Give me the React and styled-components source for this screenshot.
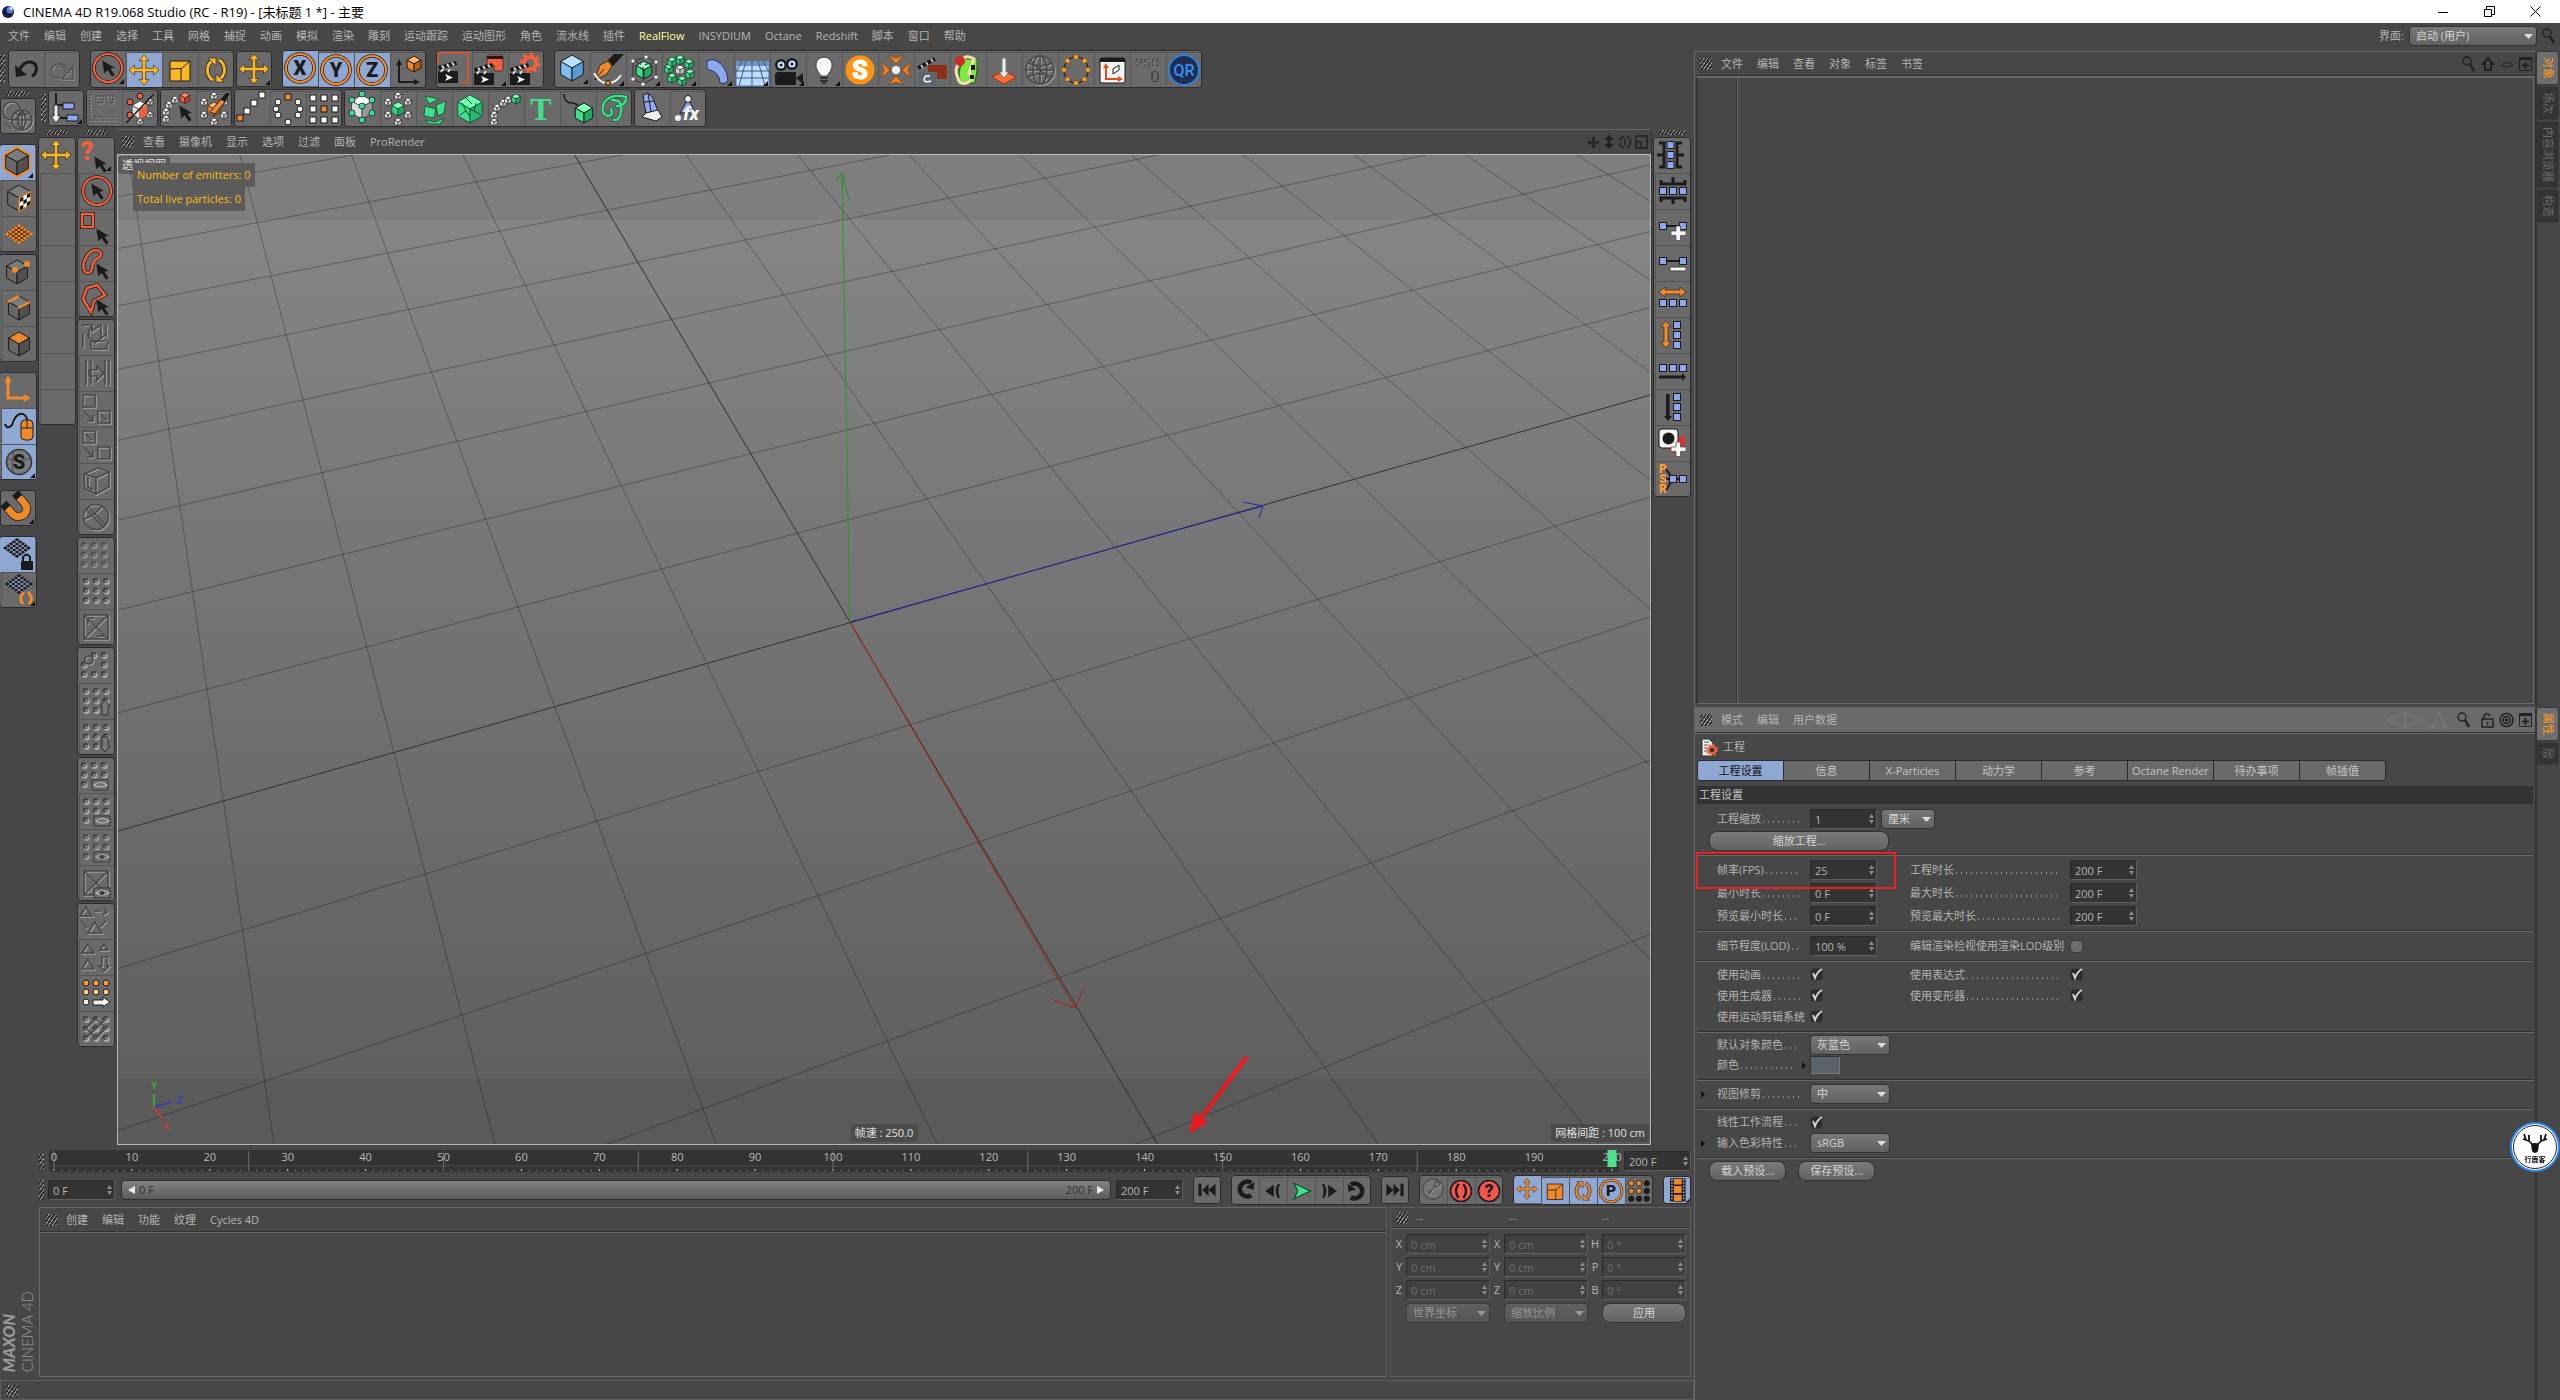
import React from "react";
import styled, { createGlobalStyle, css } from "styled-components";

const GlobalStyle = createGlobalStyle`
  * { box-sizing: border-box; }
  body {
    margin: 0;
    background: #474747;
    color: #b4b4b4;
    font: 11px/16px "Open Sans", "Noto Sans CJK SC", sans-serif;
  }
  button, input, select { font: inherit; color: inherit; margin: 0; }
  svg { display: block; }
`;

/* ---------- layout ---------- */

const Window = styled.div`
  display: flex;
  flex-direction: column;
  min-height: 100vh;
`;

const TitleBar = styled.header`
  display: flex;
  align-items: center;
  height: 23px;
  padding: 0 2px;
  background: #fff;
  color: #000;
`;

const WindowTitle = styled.h1`
  margin: 0 auto 0 8px;
  font-size: 13px;
  font-weight: 400;
`;

const WindowButton = styled.button`
  display: grid;
  place-items: center;
  width: 46px;
  height: 20px;
  padding: 0;
  border: 0;
  background: none;
`;

const MenuBar = styled.nav`
  display: flex;
  align-items: center;
  gap: 14px;
  height: ${p => p.$height || 24}px;
  padding: ${p => (p.$panel ? "0 3px 0 5px" : "0 4px 2px 8px")};
  background: ${p => (p.$light ? "#6a6a6a" : "none")};
  border-bottom: ${p => (p.$lined ? "1px solid #333" : "0")};
  box-shadow: ${p => (p.$lined ? "0 1px #696969" : "none")};
`;

const MenuItem = styled.button`
  padding: 0;
  border: 0;
  background: none;
  white-space: nowrap;
  color: ${p => (p.$hot ? "#ffff9c" : "#b4b4b4")};
`;

const Spacer = styled.div`
  flex: 1;
`;

const IconStrip = styled.div`
  display: flex;
  align-items: center;
  gap: ${p => p.$gap || 3}px;
`;

const Workspace = styled.div`
  display: flex;
  flex: 1;
`;

const LeftMain = styled.main`
  display: flex;
  flex-direction: column;
  flex: 1;
  min-width: 0;
`;

const Row = styled.div`
  display: flex;
  flex: ${p => (p.$grow ? 1 : "none")};
  min-width: 0;
`;

const Stack = styled.div`
  display: flex;
  flex-direction: column;
  flex: 1;
  min-width: 0;
`;

const Toolbar = styled.div`
  display: flex;
  align-items: center;
  height: ${p => (p.$inset ? 40 : 38)}px;
  padding-left: ${p => p.$inset || 0}px;
`;

const Palette = styled.div`
  display: flex;
  flex-direction: column;
  align-items: center;
  width: ${p => (p.$wide ? 42 : 39)}px;
  padding: ${p => (p.$first ? "3px 3px 0 0" : "2px 3px 0 0")};
`;

const Grip = styled.div`
  flex: none;
  width: ${p => p.$w || 12}px;
  height: ${p => p.$h || 12}px;
  background: repeating-linear-gradient(125deg, #a0a0a0 0 1px, #2c2c2c 1px 3px);
  opacity: 0.85;
`;

const MenuGrip = styled(Grip)`
  margin-right: -5px;
`;

const Group = styled.div`
  display: flex;
  flex: none;
  flex-direction: ${p => (p.$vertical ? "column" : "row")};
  margin: ${p => (p.$vertical ? `${p.$gap}px 0 0 0` : `0 0 0 ${p.$gap}px`)};
  border: 1px solid #2b2b2b;
  border-radius: 4px;
  overflow: hidden;
  background: #6a6a6a;
`;

const ToolButton = styled.button`
  flex: none;
  position: relative;
  width: ${p => p.$size}px;
  height: ${p => p.$size}px;
  margin: -1px;
  padding: 0;
  border: 1px solid transparent;
  background: ${p => (p.$on ? "#8fa8d3" : "#6a6a6a")};
  ${p => p.$vertical
    ? css`& + & { margin-top: 1px; border-top-color: #555; }`
    : css`& + & { margin-left: 1px; border-left-color: #555; }`}
  svg { position: absolute; inset: -1px; width: ${p => p.$size}px; height: ${p => p.$size}px; }
`;

const Brand = styled.div`
  display: flex;
  flex-direction: column;
  width: 36px;
  margin: auto 0 5px;
  writing-mode: vertical-rl;
  transform: rotate(180deg);
  color: #999;
  font: 300 15px/18px Lato, sans-serif;
  b { font: italic 900 16px/18px Lato, sans-serif; }
`;

/* ---------- viewport ---------- */

const ViewPanel = styled.section`
  display: flex;
  flex-direction: column;
  flex: 1;
  min-width: 0;
  margin-top: 1px;
  border-top: 1px solid #696969;
  border-right: 1px solid #333;
`;

const View = styled.div`
  position: relative;
  flex: 1;
  min-height: 400px;
  border: 1px solid #b9b9b9;
  overflow: hidden;
  background: linear-gradient(#858585 7%, #5f5f5f 94%);
  & > svg { position: absolute; width: 100%; height: 100%; }
`;

const SafeStrip = styled.div`
  position: absolute;
  left: 0;
  right: 0;
  height: 65px;
  ${p => (p.$bottom ? "bottom: 0;" : "top: 0;")}
  background: rgba(0, 0, 0, 0.05);
`;

const ViewLabel = styled.span`
  position: absolute;
  padding: 1px 4px;
  border-radius: 3px;
  background: rgba(64, 64, 64, 0.55);
  color: #e0e0e0;
  ${p => p.$at}
`;

const ParticleInfo = styled.div`
  position: absolute;
  left: 15px;
  top: 8px;
  display: flex;
  flex-direction: column;
  align-items: flex-start;
  color: #fdbc0b;
  span { padding: 4px; background: #5b5b5b; }
`;

/* ---------- controls ---------- */

const FieldBox = styled.span`
  display: inline-flex;
  align-items: center;
  flex: none;
  width: ${p => p.$w || 67}px;
  height: 20px;
  padding-right: 2px;
  border: 1px solid;
  border-color: #2a2a2a #606060 #606060 #2a2a2a;
  border-radius: 2px;
  background: ${p => (p.$off ? "#414141" : "#333")};
  color: ${p => (p.$off ? "#6e6e6e" : "#b4b4b4")};
  input {
    flex: 1;
    width: 0;
    height: 18px;
    padding: 0 0 0 4px;
    border: 0;
    background: none;
  }
`;

const SelectBox = styled.span`
  position: relative;
  flex: none;
  width: ${p => p.$w}px;
  height: 20px;
  opacity: ${p => (p.$off ? 0.55 : 1)};
  select {
    appearance: none;
    width: 100%;
    height: 20px;
    padding: 0 6px;
    border: 1px solid #333;
    border-radius: 4px;
    background: linear-gradient(#787878, #616161);
    color: #d4d4d4;
    opacity: 1;
  }
  svg { position: absolute; right: 4px; top: 8px; pointer-events: none; }
`;

const PillButton = styled.button`
  flex: none;
  width: ${p => p.$w}px;
  height: 20px;
  padding: 0;
  border: 1px solid #333;
  border-radius: 8px;
  background: linear-gradient(#7a7a7a, #636363);
  color: #d4d4d4;
`;

const Tick = styled.span`
  position: relative;
  flex: none;
  width: 13px;
  height: 13px;
  input {
    appearance: none;
    display: block;
    width: 13px;
    height: 13px;
    margin: 0;
    border: 1px solid #3c3c3c;
    border-radius: 4px;
    background: #6e6e6e;
  }
  input:checked { background: #2c2c2c; }
  svg { position: absolute; left: 1px; top: 0; pointer-events: none; }
`;

/* ---------- timeline ---------- */

const Timeline = styled.div`
  display: flex;
  align-items: center;
  height: 22px;
  margin: 5px 3px 4px 0;
  gap: 5px;
`;

const Ruler = styled.div`
  flex: 1;
  height: 22px;
  padding: 0 7px 0 5px;
  border-radius: 3px;
  background: linear-gradient(#333 0 15px, #3e3e3e 15px 17px, #333 17px);
  svg { width: 100%; height: 22px; overflow: visible; }
`;

const Transport = styled.div`
  display: flex;
  align-items: center;
  height: 28px;
  margin: 0 3px 3px 0;
`;

const RangeBar = styled.div`
  display: flex;
  align-items: center;
  justify-content: space-between;
  flex: 1;
  height: 20px;
  margin: 0 5px 0 6px;
  padding: 0 6px;
  border: 1px solid #2e2e2e;
  border-radius: 4px;
  background: linear-gradient(#818181, #5c5c5c);
  color: #333;
  span { display: flex; align-items: center; gap: 4px; }
`;

const Materials = styled.section`
  flex: 1;
  height: 170px;
  border: 1px solid #696969;
  border-right-color: #5c5c5c;
`;

const Coordinates = styled.section`
  width: 301px;
  height: 170px;
  margin: 0 3px 0 3px;
  border: 1px solid #5c5c5c;
`;

const CoordHead = styled.div`
  display: grid;
  grid-template-columns: 20px 93px 93px 1fr;
  align-items: center;
  height: 20px;
  padding-left: 5px;
  border-bottom: 1px solid #333;
  box-shadow: 0 1px #696969;
  color: #8c8c8c;
`;

const CoordGrid = styled.div`
  display: grid;
  grid-template-columns: 10px 84px 10px 84px 10px 84px;
  gap: 3px 2px;
  align-items: center;
  padding: 6px 0 0 3px;
  label { text-align: center; }
`;

const Status = styled.footer`
  height: 20px;
  margin-top: 3px;
  padding: 4px;
  border: 1px solid #5e5e5e;
`;

/* ---------- right side ---------- */

const Side = styled.aside`
  display: flex;
  flex-direction: column;
  width: 34%;
  max-width: 866px;
  border-left: 1px solid #696969;
`;

const Dock = styled.section`
  display: flex;
  flex: ${p => (p.$grow ? 1 : "none")};
  margin-top: 1px;
`;

const DockBody = styled.div`
  display: flex;
  flex-direction: column;
  flex: 1;
  min-width: 0;
  border-top: 1px solid #696969;
  border-right: 2px solid #343434;
`;

const ObjectList = styled.div`
  min-height: 627px;
  margin: 1px 1px 2px 1px;
  border: 1px solid #696969;
  border-left: 2px solid #363636;
  background: linear-gradient(90deg, transparent 38px, #363636 38px 39px, #696969 39px 40px, transparent 40px);
`;

const DockTabs = styled.div`
  display: flex;
  flex-direction: column;
  gap: 1px;
  width: 23px;
`;

const DockTab = styled.button`
  width: 22px;
  padding: 5px 0;
  border: 1px solid #3a3a3a;
  border-left: 0;
  border-radius: 0 4px 4px 0;
  background: ${p => (p.$on ? "#6e6e6e" : "#343434")};
  color: ${p => (p.$on ? "#ff9d14" : "#6c6c6c")};
  line-height: 16px;
  writing-mode: vertical-rl;
  text-orientation: sideways;
`;

const Attributes = styled.div`
  position: relative;
  padding: 1px 2px 0 2px;
`;

const ObjectName = styled.div`
  display: flex;
  align-items: center;
  gap: 5px;
  height: 26px;
  padding-left: 4px;
`;

const Tabs = styled.div`
  display: flex;
  width: 689px;
  max-width: 100%;
  border: 1px solid #2b2b2b;
  border-radius: 3px;
  overflow: hidden;
`;

const Tab = styled.button`
  flex: 1;
  height: 19px;
  padding: 0;
  border: 0;
  white-space: nowrap;
  background: ${p => (p.$on ? "#8fa8d3" : "#6a6a6a")};
  color: ${p => (p.$on ? "#111" : "#c4c4c4")};
  & + & { border-left: 1px solid #2b2b2b; }
`;

const SectionTitle = styled.h2`
  height: 18px;
  margin: 5px 0 0;
  padding-left: 2px;
  background: #333;
  font-size: 11px;
  line-height: 18px;
  font-weight: 400;
  color: #c4c4c4;
`;

const Block = styled.div`
  display: flex;
  flex-direction: column;
  gap: ${p => p.$gap || 0}px;
  padding: ${p => p.$top || 3}px 0 ${p => p.$bottom || 4}px;
  border-top: 1px solid ${p => (p.$plain ? "transparent" : "#333")};
  box-shadow: ${p => (p.$plain ? "none" : "inset 0 1px #686868")};
`;

const PropRow = styled.div`
  display: flex;
  align-items: center;
  height: ${p => p.$h || 20}px;
`;

const Prop = styled.div`
  display: flex;
  align-items: center;
  flex: none;
  gap: 4px;
  padding-left: ${p => (p.$second ? 0 : 20)}px;
  width: ${p => (p.$second ? 240 : 213)}px;
  & > svg:first-child { margin: 0 8px 0 -16px; }
`;

const Label = styled.label`
  display: flex;
  align-items: center;
  width: ${p => (p.$second ? 156 : p.$short ? 81 : 89)}px;
  flex: none;
  white-space: nowrap;
  &::after {
    content: "";
    flex: 1;
    height: 2px;
    margin: 6px 6px 0 2px;
    background: repeating-linear-gradient(90deg, #8c8c8c 0 1px, transparent 1px 5px);
  }
`;

const Swatch = styled.button`
  width: 30px;
  height: 18px;
  padding: 0;
  border: 1px solid;
  border-color: #333 #777 #777 #333;
  background: #5a626c;
`;

const Buttons = styled.div`
  display: flex;
  gap: 12px;
  padding-left: 12px;
`;

const FpsFrame = styled.div`
  position: absolute;
  left: 1px;
  top: 119px;
  width: 200px;
  height: 37px;
  border: 2px solid #ee1c24;
  pointer-events: none;
`;

const Badge = styled.div`
  position: fixed;
  right: 0;
  bottom: 228px;
`;

/* ---------- icon parts, drawn in a 36px cell ---------- */

const K = "#1b1b1b";
const OR = "#f08a28";
const YE = "#fdb722";
const RE = "#f0603a";
const GR = "#3fe08c";
const BL = "#8fa6f0";

const Cube = ({ x = 18, y = 18, s = 10, t = "#7c7c7c", l = "#686868", r = "#505050", o = K, w = 1 }) => {
  const d = s * 0.87;
  const h = s / 2;
  return (
    <g stroke={o} strokeWidth={w} strokeLinejoin="round">
      <path fill={t} d={`M${x} ${y - s}L${x + d} ${y - h}L${x} ${y}L${x - d} ${y - h}Z`} />
      <path fill={l} d={`M${x - d} ${y - h}L${x} ${y}V${y + s}L${x - d} ${y + h}Z`} />
      <path fill={r} d={`M${x + d} ${y - h}L${x} ${y}V${y + s}L${x + d} ${y + h}Z`} />
    </g>
  );
};

const MiniCube = ({ x, y, c = "w", s = 4 }) => {
  const tone = { w: ["#fff", "#ddd", "#bbb"], g: ["#7fffb9", "#33d982", "#22a863"], r: ["#ff8d68", RE, "#c23f1f"], o: ["#ffb765", OR, "#b95f10"] }[c];
  return <Cube x={x} y={y} s={s} t={tone[0]} l={tone[1]} r={tone[2]} w={0.6} />;
};

const Cursor = ({ x = 11, y = 10 }) => (
  <path transform={`translate(${x} ${y})`} fill={K} stroke="#777" strokeWidth="0.5" d="M0 0L2 14L5.500 10.500L10 17L13 15L9 9L13.500 8Z" />
);

const Move = ({ c = YE, s = 1 }) => (
  <path
    transform={`translate(18 18) scale(${s})`}
    fill={c} stroke={K} strokeWidth="0.600" strokeLinejoin="round"
    d="M0-15L5-9.500H1.700V-1.700H9.500V-5L15 0L9.500 5V1.700H1.700V9.500H5L0 15L-5 9.500H-1.700V1.700H-9.500V5L-15 0L-9.500-5V-1.700H-1.700V-9.500H-5Z"
  />
);

const Scale = ({ c = YE }) => (
  <g fill={c} stroke={K}>
    <path d="M8 9H28V29H8Z" />
    <path fill="none" d="M8 17L19 16.500V29M19 17L28 9" />
  </g>
);

const Rotate = ({ c = YE }) => (
  <g>
    <g fill="none" stroke={K} strokeWidth="4.500"><path d="M15 28A10 11 0 0 1 14 9M21 8A10 11 0 0 1 22 27" /></g>
    <g fill="none" stroke={c} strokeWidth="3"><path d="M15 28A10 11 0 0 1 14 9M21 8A10 11 0 0 1 22 27" /></g>
    <path fill={c} stroke={K} strokeWidth="0.600" d="M10 6H18V14ZM26 30H18V22Z" />
  </g>
);

const Ring = ({ c, children }) => (
  <g>
    <circle cx="18" cy="18" r="14" fill="none" stroke={K} strokeWidth="3.600" />
    <circle cx="18" cy="18" r="14" fill="none" stroke={c} strokeWidth="2.200" />
    {children}
  </g>
);

const Glyph = ({ x = 18, y = 25, size = 20, fill = K, children, ...rest }) => (
  <text x={x} y={y} fontSize={size} fill={fill} textAnchor="middle" fontWeight="900" fontFamily="Roboto, sans-serif" {...rest}>{children}</text>
);

const Emboss = ({ children }) => (
  <g fill="none" strokeWidth="1.600">
    <g stroke="#a2a2a2" transform="translate(1 1)">{children}</g>
    <g stroke="#484848">{children}</g>
  </g>
);

const Clap = ({ c = K }) => (
  <g>
    <path fill={c} d="M2 21H22V33H2Z" />
    <path fill={c} d="M2 16L20 11L21 15L3 20Z" />
    <path stroke="#ddd" strokeWidth="2" d="M6 15.500L8 18.500M11 14L13 17M16 12.500L18 15.500M5 22L7 19M12 22L14 19" />
    <path fill="#fff" d="M9 24L17 27.500L9 31L11 27.500Z" />
  </g>
);

const Sq = ({ x, y, s = 7, c = BL }) => (
  <rect x={x - s / 2} y={y - s / 2} width={s} height={s} fill={c} stroke={K} strokeWidth="1" />
);

const Dots = ({ skip = "", cols = [7, 17, 27], rows = [8, 17.5, 27] }) => (
  <g>
    {rows.map((y, r) => cols.map((x, c) => {
      if (skip.includes(String(r * 3 + c))) return null;
      return (
        <g key={`${x}-${y}`}>
          <circle cx={x + 0.7} cy={y + 0.9} r="3" fill="#b0b0b0" />
          <circle cx={x - 0.4} cy={y - 0.4} r="2.700" fill="#3a3a3a" />
          <circle cx={x + 0.3} cy={y + 0.3} r="1.700" fill="#7c7c7c" />
        </g>
      );
    }))}
  </g>
);

const Eye = ({ open }) => (
  <g>
    <path fill="#707070" stroke="#333" d="M15 23H31V33H15Z" />
    <path fill="none" stroke="#bbb" strokeWidth="1.200" d="M17 28Q23 23 30 28Q23 32 17 28Z" />
    {open && <circle cx="23" cy="28" r="2" fill="#333" />}
  </g>
);

const Plus = () => <path fill="#f4f4f4" stroke="#444" strokeWidth="0.700" d="M21 17H25.500V22H31V26.500H25.500V31.500H21V26.500H16V22H21Z" />;

const Mesh = ({ y = 12, c = K, w = 14 }) => (
  <g>
    <path fill={c} d={`M18 ${y - 10}L${18 + w} ${y}L18 ${y + 10}L${18 - w} ${y}Z`} />
    <g fill="none" stroke={c === K ? "#8a9abf" : "#4a2c0a"} strokeWidth="1">
      {[-0.6, -0.2, 0.2, 0.6].map(k => (
        <path key={k} d={`M${18 + (k - 1) * w / 2} ${y + (k + 1) * 5}L${18 + (k + 1) * w / 2} ${y + (k - 1) * 5}M${18 + (k - 1) * w / 2} ${y - (k + 1) * 5}L${18 + (k + 1) * w / 2} ${y + (1 - k) * 5}`} />
      ))}
    </g>
  </g>
);

const ring6 = [[18, 5], [28, 11], [28, 24], [18, 31], [8, 24], [8, 11]];

const icons = {
  undo: <g><path fill="none" stroke={K} strokeWidth="3" d="M11 21Q15 11 23 12Q30 14 28 21Q27 25 24 26" /><path fill={K} d="M7 15L8 27L19 25Z" /></g>,
  redo: <g opacity="0.6"><Emboss><path d="M26 21Q22 11 14 12Q6 14 8 21Q10 27 16 26M29 15V27H18ZM13 15Q20 12 22 21" /></Emboss></g>,
  live: <Ring c={RE}><Cursor x={12} y={10} /></Ring>,
  move: <Move />,
  scale: <Scale />,
  rotate: <Rotate />,
  x: <Ring c={OR}><Glyph>X</Glyph></Ring>,
  y: <Ring c={OR}><Glyph>Y</Glyph></Ring>,
  z: <Ring c={OR}><Glyph>Z</Glyph></Ring>,
  coord: <g><path fill="none" stroke={K} strokeWidth="2" d="M9 12V30H26" /><path fill={K} d="M9 7L12 13H6ZM30 30L24 27V33Z" /><Cube x={24} y={12} s={8} t="#ffb765" l={OR} r="#b95f10" /></g>,
  clapFrame: <g><path fill="none" stroke="#c65a35" strokeWidth="2" d="M2 14V3H32V33H24" /><Clap /></g>,
  clapBox: <g><path fill={RE} stroke={K} strokeWidth="0.600" d="M15 5Q15 3 17 3H29Q31 3 31 5V17Q31 19 29 19H22V13H15Z" /><path fill={K} d="M15 4H31V7H15Z" /><Clap /></g>,
  clapGear: <g><circle cx="22" cy="11" r="6" fill="none" stroke={RE} strokeWidth="4" /><circle cx="22" cy="11" r="9" fill="none" stroke={RE} strokeWidth="3" strokeDasharray="3.500 3.500" /><Clap /></g>,
  cube: <Cube s={13} t="#b9e0ff" l="#7dbdf2" r="#5a9bd6" />,
  pen: <g><path fill={OR} stroke={K} strokeWidth="0.800" d="M5 28L10 13L18 9L22 14L17 22Z" /><path fill={K} d="M18 8L24 2H34L23 14Z" /><path stroke={K} d="M5 28L14 17" /><path fill="none" stroke="#eee" strokeWidth="2" d="M4 21Q10 32 18 31Q26 31 31 23" /><circle cx="18" cy="31" r="2.500" fill={OR} stroke={K} /></g>,
  subdiv: <g><Cube s={9} t="#7fffb9" l={GR} r="#22a863" /><path fill="none" stroke="#333" d="M7 9L20 5L30 10V25L17 32L7 27ZM7 9L17 13V32M17 13L30 10" /><g fill="#fff">{[[7, 9], [20, 5], [30, 10], [30, 25], [17, 32], [7, 27], [17, 13]].map(([a, b]) => <circle key={a + b * 40} cx={a} cy={b} r="1.600" />)}</g></g>,
  array: <g>{[[18, 8], [27, 12], [28, 22], [20, 29], [10, 26], [7, 17], [10, 10]].map(([a, b]) => <MiniCube key={a + b * 40} x={a} y={b} c="g" s={5} />)}<MiniCube x={18} y={18} s={5} /></g>,
  bend: <path fill={BL} stroke="#26306a" d="M9 9Q14 6 19 9Q29 15 30 29Q26 33 22 31Q22 20 9 17Z" />,
  floor: <g><path fill="#bcdcff" stroke="#4c6f9c" d="M2 10H35V34H2Z" /><path fill="#6f93c4" d="M2 9H35V14H2Z" /><path stroke="#3c5c88" fill="none" d="M2 19H35M2 26H35M12 9L5 34M18 9V34M24 9L31 34M8 9L2 20M29 9L35 20" /></g>,
  camera: <g fill={K}><circle cx="11" cy="13" r="6" /><circle cx="22" cy="12" r="6" /><path d="M7 20H26V33H7Q5 33 5 31V22ZM26 26L33 21V32Z" /><circle cx="11" cy="13" r="3.500" fill="#cfe2ff" /><circle cx="22" cy="12" r="3.500" fill="#cfe2ff" /><circle cx="11" cy="13" r="1.500" /><circle cx="22" cy="12" r="1.500" /></g>,
  bulb: <g><path fill="#f7f7f7" stroke="#444" d="M18 5Q27 6 26 15Q25 19 21 24H15Q11 19 10 15Q9 6 18 5Z" /><path stroke="#333" strokeWidth="2" d="M14 26H22M14 29H22M16 31H20" /></g>,
  s: <g><circle cx="18" cy="18" r="14.500" fill="#ff9312" /><Glyph fill="#fff" size={25} y={27} stroke="#fff">S</Glyph></g>,
  particles: <g fill="#ff7a12" stroke="#502000" strokeWidth="0.400"><path d="M10 3L18 6L26 3L18 12ZM10 33L18 30L26 33L18 24ZM3 10L6 18L3 26L12 18ZM33 10L30 18L33 26L24 18Z" /><circle cx="18" cy="18" r="4.500" fill="#eee" /></g>,
  clapRed: <g><path fill="#8e2f1a" d="M14 13H33V27H14Z" /><path fill="#5d6670" d="M5 20H23V33H5Z" /><path stroke={K} strokeWidth="4" d="M4 16L21 7" /><path stroke="#ddd" strokeWidth="1.500" d="M7 13L9 16M12 10L14 13M17 7L19 10" /><path fill="none" stroke="#fff" strokeWidth="1.500" d="M16 24H12Q10 25 10 28Q11 31 17 29" /></g>,
  frog: <g><path fill="#7bea3f" stroke="#215c12" d="M13 7H27V18L25 31H10L9 20Z" /><path fill="none" stroke="#f8dcb4" strokeWidth="3" d="M8 26Q3 17 11 8Q17 2 24 7L19 21Q25 27 17 31Q8 33 8 25" /><circle cx="10" cy="9" r="5" fill="#d32a25" /><path fill={K} d="M21 13H25V18H21ZM20 23H24V27H20Z" /></g>,
  drop: <g><path fill="#ff6b35" stroke="#993512" d="M18 19L30 25L18 32L6 25Z" /><path fill="#eee" stroke="#777" d="M16 6H20V20H23L18 26L13 20H16Z" /></g>,
  globe: <Emboss><circle cx="18" cy="18" r="14" /><ellipse cx="18" cy="18" rx="7" ry="14" /><path d="M4 18H32M6 11Q18 17 30 11M6 25Q18 19 30 25M18 4V32M8 8L28 28" /></Emboss>,
  dotRing: <g><ellipse cx="18" cy="18" rx="12" ry="13" fill="none" stroke="#3c2a12" strokeWidth="1.500" />{[0, 1, 2, 3, 4, 5, 6, 7].map(i => <circle key={i} cx={18 + 12 * Math.cos(i * Math.PI / 4)} cy={18 + 13 * Math.sin(i * Math.PI / 4)} r="2.500" fill="#f0a030" stroke="#5a3a10" strokeWidth="0.500" />)}</g>,
  docAxis: <g><rect x="6" y="6" width="25" height="25" rx="2" fill="#f3f3f3" stroke={K} /><path fill={K} d="M6 6H31V10H6Z" /><path fill="none" stroke="#d9501f" strokeWidth="2" d="M12 14V27H27" /><path fill="#d9501f" d="M12 11L15 16H9ZM29 27L24 24V30Z" /><path fill="none" stroke={K} d="M19 22V17L25 13V18Z" /></g>,
  psr: <g><Glyph fill="#484848" stroke="#8e8e8e" strokeWidth="0.400" size={13} x={17} y={15}>PSR</Glyph><Glyph fill="#484848" stroke="#8e8e8e" strokeWidth="0.400" size={18} x={25} y={31}>0</Glyph></g>,
  qr: <g><circle cx="18" cy="18" r="15" fill="#202c50" stroke="#2a86e6" strokeWidth="2" /><Glyph fill="#3192f2" size={16} y={24} fontWeight="500">QR</Glyph></g>,

  tree: <g><path fill="none" stroke={K} strokeWidth="2" d="M8 3V15H18M8 15V28H20" /><path fill="#eee" stroke="#333" d="M6 15H10V26H13L8 33L3 26H6Z" /><path fill={BL} stroke={K} d="M15 13H26V19H15ZM19 25H30V31H19Z" /></g>,
  align: <g opacity="0.6"><Emboss><path d="M4 5V31M4 31H31M8 28H30M10 7H17V14H10ZM20 7H27V14H20Z" strokeDasharray="2 1" /></Emboss></g>,
  slashCluster: <g><MiniCube x={18} y={19} s={9} />{ring6.map(([a, b], i) => (i < 1 || i > 3 ? <circle key={i} cx={a} cy={b} r="3" fill={RE} stroke={K} /> : <MiniCube key={i} x={a} y={b} s={3.5} />))}<path fill={RE} d="M18 18L25 13V24L18 28Z" /><path stroke={K} strokeWidth="1.500" d="M4 32L32 3" /></g>,
  splineCursor: <g>{[[6, 30], [6, 23], [9, 16], [15, 11]].map(([a, b]) => <MiniCube key={b} x={a} y={b} />)}<MiniCube x={25} y={9} c="r" s={5.5} /><Cursor x={19} y={16} /></g>,
  paint: <g>{ring6.map(([a, b]) => <MiniCube key={a * b} x={a} y={b} />)}<MiniCube x={18} y={18} c="o" s={7} /><path fill={OR} stroke={K} d="M14 21L25 8L29 11L19 23Z" /><path fill={K} d="M25 8L30 2H34L29 11Z" /></g>,
  linear: <g>{[[6, 29, OR], [13, 22], [20, 14], [28, 6]].map(([a, b, c]) => <Sq key={a} x={a} y={b} s={6} c={c || "#fff"} />)}</g>,
  radial: <g fill="#eee" stroke={K}>{ring6.concat([[6, 18], [30, 18]]).map(([a, b], i) => (i === 0 ? <Sq key="o" x={18} y={6} s={6} c={OR} /> : <circle key={i} cx={a} cy={b} r="3" />))}</g>,
  grid9: <g>{[7, 18, 29].map(a => [7, 18, 29].map(b => <Sq key={a + "-" + b} x={a} y={b} s={6} c={a === 18 && b === 18 ? OR : "#fff"} />))}</g>,
  matrix: <g><Cube s={12} t="#fff" l="#ddd" r="#999" w={0.6} />{ring6.concat([[18, 17]]).map(([a, b]) => <circle key={a * b} cx={a} cy={b} r="3" fill={GR} stroke="#124" strokeWidth="0.800" />)}</g>,
  cloner: <g>{ring6.map(([a, b]) => <MiniCube key={a * b} x={a} y={b} />)}<MiniCube x={18} y={18} c="g" s={7} /></g>,
  fracture: <g fill={GR} stroke="#0d4a2b" strokeWidth="0.800"><path d="M9 5L23 8L13 13ZM9 15L20 18L18 27L8 25ZM20 14L30 10L28 22L22 25ZM9 29L19 31L28 27L24 33H13Z" /></g>,
  voronoi: <g><Cube s={14} t="#6dffb3" l={GR} r="#28b86f" o="#0d4a2b" w={0.8} /><path fill="none" stroke="#0d4a2b" d="M10 12L14 20L8 24M14 20L18 26M24 12L22 20L29 24M22 20L18 18M14 7L20 13" /></g>,
  tracer: <g>{[[6, 31], [6, 24], [9, 17], [15, 12], [20, 9]].map(([a, b]) => <MiniCube key={b} x={a} y={b} />)}<MiniCube x={28} y={8} c="g" s={5} /></g>,
  text: <Glyph size={32} x={17} y={29} fill={GR} fontFamily="Liberation Serif, serif" fontWeight="700">T</Glyph>,
  wireCube: <g><path fill="none" stroke={K} strokeWidth="1.500" d="M4 3Q4 12 12 12Q18 12 22 20" /><Cube x={24} y={22} s={10} t="#7fffb9" l={GR} r="#22a863" /></g>,
  swirl: <g fill="none" strokeLinecap="round"><path stroke="#125a35" strokeWidth="3.600" d="M30 6Q14 2 8 12Q4 23 12 25Q18 24 15 18M16 9Q27 9 25 20Q24 30 18 29M21 15Q29 15 30 8" /><path stroke={GR} strokeWidth="2.400" d="M30 6Q14 2 8 12Q4 23 12 25Q18 24 15 18M16 9Q27 9 25 20Q24 30 18 29M21 15Q29 15 30 8" /></g>,
  bend2: <g stroke={K}><path fill={BL} d="M9 6L14 4L19 9L24 22L12 24L10 14Z" /><path fill="none" d="M10 13L20 12M14 4L17 23" /><path fill="#eee" d="M8 28L12 24L24 21L28 28L22 32Z" /></g>,
  fx: <g><path fill={BL} stroke={K} d="M18 8L26 22H10Z" /><circle cx="18" cy="8" r="3.500" fill="#eee" stroke={K} /><circle cx="8" cy="27" r="3" fill="#eee" /><Glyph fill="#f4f4f4" size={18} x={21} y={29} fontStyle="italic">fx</Glyph></g>,

  globes: <Emboss><circle cx="12" cy="13" r="9" /><circle cx="22" cy="22" r="10" /><path d="M12 22H32M15 15Q22 19 29 15M22 12V32M22 12Q14 22 22 32M22 12Q30 22 22 32M5 25L12 31" /></Emboss>,
  modelCube: <g><path fill="none" stroke={OR} strokeWidth="3.500" strokeLinejoin="round" d="M18 4L30 11V25L18 32L6 25V11Z" /><Cube s={13} /></g>,
  texCube: <g><Cube s={13} /><g transform="matrix(.87 -.5 0 1 18 18)"><path fill="#fff" stroke={OR} strokeWidth="1.500" d="M0 0H13V13H0Z" /><path fill={K} d="M1 1H5V5H1ZM9 1H13V5H9ZM5 5H9V9H5ZM1 9H5V13H1ZM9 9H13V13H9Z" /></g></g>,
  meshOrange: <Mesh y={18} c={OR} />,
  pointCube: <g><Cube s={12} /><circle cx="16" cy="16" r="3" fill={OR} /><circle cx="28" cy="10" r="3" fill={OR} /></g>,
  edgeCube: <g><Cube s={12} /><path stroke={OR} strokeWidth="2.500" d="M7 12L18 6M17 18L29 12" /></g>,
  faceCube: <Cube s={12} t={OR} />,
  axisL: <g fill="none" stroke={OR} strokeWidth="3"><path d="M9 8V26H27" /><path fill={OR} strokeWidth="1" d="M9 4L12 10H6ZM31 26L25 23V29Z" /></g>,
  mouse: <g><path fill="none" stroke={K} strokeWidth="2" d="M4 16Q6 22 11 17Q15 4 22 6Q27 9 26 14" /><rect x="20" y="12" width="12" height="20" rx="4" fill={OR} stroke={K} /><path stroke={K} d="M20 20H32M26 12V20" /></g>,
  snapS: <g><circle cx="18" cy="18" r="12.500" fill="#7c7c7c" stroke="#333" strokeWidth="1.500" /><path fill="none" stroke="#4a4a4a" d="M6 14Q18 20 30 14M12 29Q10 18 13 7" /><Glyph size={20} y={25}>S</Glyph></g>,
  magnet: <g transform="rotate(-42 18 18)"><path fill="none" stroke={K} strokeWidth="8.500" d="M10 5V19A8 8 0 0 0 26 19V5" /><path fill="none" stroke={OR} strokeWidth="7" d="M10 11V19A8 8 0 0 0 26 19V11" /></g>,
  meshLock: <g><Mesh /><rect x="22" y="25" width="12" height="9" fill={K} /><path fill="none" stroke={K} strokeWidth="2" d="M24 25V21Q28 16 31 21V25" /></g>,
  meshRot: <g><Mesh /><path fill="none" stroke={OR} strokeWidth="3" d="M23 20Q17 26 22 32M27 20Q33 26 28 32" /></g>,

  help: <g><Glyph fill={RE} size={25} x={10} y={23}>?</Glyph><Cursor x={17} y={19} /></g>,
  rectSel: <g><path fill="none" stroke={K} strokeWidth="4" d="M3 5H14V18H3Z" /><path fill="none" stroke={RE} strokeWidth="2.500" d="M3 5H14V18H3Z" /><Cursor x={17} y={19} /></g>,
  lasso: <g fill="none"><path stroke={K} strokeWidth="4" d="M8 28Q3 26 5 17Q9 5 18 5Q24 8 21 12Q13 15 13 24Q12 28 8 28Z" /><path stroke={RE} strokeWidth="2.500" d="M8 28Q3 26 5 17Q9 5 18 5Q24 8 21 12Q13 15 13 24Q12 28 8 28Z" /><Cursor x={17} y={18} /></g>,
  polySel: <g fill="none"><path stroke={K} strokeWidth="4" d="M12 31L4 18L8 7L18 4L26 14L15 20Z" /><path stroke={RE} strokeWidth="2.500" d="M12 31L4 18L8 7L18 4L26 14L15 20Z" /><Cursor x={17} y={18} /></g>,
  e1: <Emboss><path d="M5 6H15L12 12V20M15 6V12L24 6V20M29 5V18M6 14V28M10 16L18 24L28 16M14 30V22H28M14 30H30V24" /></Emboss>,
  e2: <Emboss><path d="M7 5V30M12 5V30M26 5V30M30 5V30M10 15H18V11L25 18L18 25V21H10Z" /></Emboss>,
  e3: <Emboss><path d="M4 4H16V16H4ZM19 20H31V32H19ZM5 20L14 30M14 24V30H8M22 24L28 29" /></Emboss>,
  e4: <Emboss><path d="M4 4H16V16H4ZM19 20H31V32H19ZM5 20L14 30M14 24V30H8M7 7L13 13" /></Emboss>,
  e5: <Emboss><path d="M5 11L19 5L30 9V24L17 31L6 26ZM6 11L17 15V31M17 15L30 9M9 14V24L14 27" /></Emboss>,
  e6: <Emboss><circle cx="17" cy="18" r="12.500" /><path d="M7 10L24 28M9 8L27 26M5 20Q16 17 23 7" /></Emboss>,
  d1: <g opacity="0.6"><Dots /></g>,
  d2: <Dots />,
  eX: <Emboss><path d="M5 6H29V30H5ZM5 6L29 30M5 30L29 6M9 9H15M9 9V15M25 27H18" /></Emboss>,
  d3: <g><Dots skip="04" /><Emboss><circle cx="12" cy="13" r="4" /></Emboss></g>,
  d4: <g><Dots skip="8" /><path fill="#777" stroke="#333" d="M26 17L31 23H29V32H23V23H21Z" /></g>,
  d5: <g><Dots skip="8" /><path fill="#777" stroke="#333" d="M23 18H29V27H31L26 33L21 27H23Z" /></g>,
  v1: <g><Dots skip="78" /><Eye /></g>,
  v2: <g><Dots skip="78" /><Eye /></g>,
  v3: <g opacity="0.8"><Dots skip="78" /><Eye open /></g>,
  v4: <g><Emboss><path d="M5 6H29V30H5ZM5 6L29 30M5 30L29 6" /></Emboss><Eye open /></g>,
  t1: <Emboss><path d="M3 13L9 4L15 13ZM11 30L18 19L25 30ZM17 8H24M4 18L10 25M29 18L23 24M27 5L30 9L26 12" /></Emboss>,
  t2: <Emboss><path d="M3 14L9 5L15 14ZM3 30L9 20L15 30ZM23 18H28V27H30L25 32L20 27H23ZM21 11L25 5L29 11Z" /></Emboss>,
  orangeDots: <g stroke={K}>{[8, 17, 27].map((b, r) => [7, 17, 27].map((a, c) => (r === 2 && c > 0 ? null : <circle key={a + "-" + b} cx={a} cy={b} r="3" fill={["#ff9d35", "#ffc78c", "#eee"][r]} />)))}<path fill="#f4f4f4" d="M14 25H24V22L31 27L24 32V30H14Z" /></g>,
  t4: <g><Dots /><Emboss><path d="M7 17L17 8L27 17L17 27ZM7 27L27 8" /></Emboss></g>,

  n0: <g><path fill="none" stroke={K} strokeWidth="3" d="M6 6H11V30H6M29 6H24V30H29M4 18H11M24 18H31" /><Sq x={17.500} y={8} /><Sq x={17.500} y={18} /><Sq x={17.500} y={28} /></g>,
  n1: <g><path fill="none" stroke={K} strokeWidth="3" d="M6 7V11H30V7M6 29V25H30V29M18 4V11M18 25V31" /><Sq x={8} y={18} /><Sq x={18} y={18} /><Sq x={28} y={18} /></g>,
  n2: <g><path stroke={K} strokeWidth="2" d="M8 17H28" /><Sq x={8} y={17} /><Sq x={28} y={17} /><Plus /></g>,
  n3: <g><path stroke={K} strokeWidth="2" d="M8 16H28" /><Sq x={8} y={16} /><Sq x={28} y={16} /><path fill="#f4f4f4" stroke="#444" d="M15 22H31V26H15Z" /></g>,
  n4: <g><path fill={OR} stroke={K} strokeWidth="0.600" d="M4 11L10 6V9H25V6L31 11L25 16V13H10V16Z" /><Sq x={8} y={22} /><Sq x={18} y={22} /><Sq x={28} y={22} /></g>,
  n5: <g><path fill={OR} stroke={K} strokeWidth="0.600" d="M11 4L16 10H13V25H16L11 31L6 25H9V10H6Z" /><Sq x={22} y={8} /><Sq x={22} y={18} /><Sq x={22} y={28} /></g>,
  n6: <g><path fill={K} d="M4 22.500H27V20L31 24L27 28V25.500H4Z" /><Sq x={8} y={15} /><Sq x={18} y={15} /><Sq x={28} y={15} /></g>,
  n7: <g><path fill={K} d="M11 5H14.500V27H17L13 32L9 27H11Z" /><Sq x={22} y={8} /><Sq x={22} y={18} /><Sq x={22} y={28} /></g>,
  n8: <g><path fill="#d33" d="M12 23L27 10L30 13V25L22 30Z" /><rect x="4" y="4" width="19" height="19" rx="3" fill="#f4f4f4" stroke={K} /><circle cx="13.500" cy="13.500" r="6" fill={K} /><Plus /></g>,
  n9: <g><path stroke={K} strokeWidth="2" d="M11 8L18 18M11 29L18 18M11 18H28" /><Sq x={18} y={18} /><Sq x={28} y={18} /><Glyph fill="#ff9d35" size={12} x={8} y={12}>P</Glyph><Glyph fill="#ff9d35" size={12} x={8} y={22}>S</Glyph><Glyph fill="#ff9d35" size={12} x={8} y={32}>R</Glyph></g>,

  first: <g><path fill={K} d="M7 10H11V26H7ZM20 10V26L12 18ZM29 10V26L20 18Z" /></g>,
  prevKey: <g><path fill="none" stroke={K} strokeWidth="6" d="M26 10A9.500 9.500 0 1 0 26 26" /><path fill={K} d="M30 9L29 19L19 16Z" /></g>,
  prev: <path fill={K} d="M19 10V26L8 18ZM24 9Q19 18 24 27H27Q23 18 27 9Z" />,
  play: <path fill={GR} stroke="#0d4a2b" strokeWidth="1.500" d="M9 8L30 18L9 28L14 18Z" />,
  next: <path fill={K} d="M17 10V26L28 18ZM12 9Q17 18 12 27H9Q13 18 9 9Z" />,
  nextKey: <g><path fill="none" stroke={K} strokeWidth="6" d="M10 10A9.500 9.500 0 1 1 10 26" /><path fill={K} d="M6 9L7 19L17 16Z" /></g>,
  last: <path fill={K} d="M29 10H25V26H29ZM16 10V26L24 18ZM7 10V26L16 18Z" />,
  key: <g><circle cx="18" cy="18" r="13" fill="#777" stroke="#555" strokeWidth="2" /><Emboss><path d="M12 25L22 13M22 8L27 12L23 16L20 13ZM12 20L16 24" /></Emboss></g>,
  autokey: <g><circle cx="18" cy="18" r="13.500" fill="#f4554f" stroke={K} strokeWidth="2" /><path fill="none" stroke={K} strokeWidth="3" d="M15 9Q8 18 15 27M21 9Q28 18 21 27" /></g>,
  ask: <g><circle cx="18" cy="18" r="13.500" fill="#f4554f" stroke={K} strokeWidth="2" /><Glyph size={23} y={26}>?</Glyph></g>,
  moveO: <Move c={OR} s={0.9} />,
  scaleO: <Scale c={OR} />,
  rotateO: <Rotate c={OR} />,
  p: <Ring c={OR}><Glyph>P</Glyph></Ring>,
  dotsO: <g>{[8, 18, 28].map(a => [8, 18, 28].map(b => <circle key={a + "-" + b} cx={a} cy={b} r="3.500" fill={b === 28 || a === 28 ? K : OR} stroke={K} />))}</g>,
  film: <g><path fill={K} d="M9 3H29V33H9Z" /><path fill={OR} d="M14 4H24V11H14ZM14 13H24V22H14ZM14 24H24V32H14Z" /><path stroke="#bbb" strokeWidth="2" strokeDasharray="2 2" d="M11.500 4V33M26.500 4V33" /></g>,
};

/* "name*" is a pressed button, "name+" one with a drop-out menu in its corner */
const Tools = ({ items, gap = 2, vertical, size = 36 }) => (
  <Group $vertical={vertical} $gap={gap}>
    {items.split(" ").map((item, i) => {
      const name = item.replace(/[*+]/g, "");
      return (
        <ToolButton key={i} $size={size} $vertical={vertical} $on={item.includes("*")} aria-label={name}>
          <svg viewBox="0 0 36 36">
            {icons[name]}
            {item.includes("+") && <path fill="#111" d="M34 29V34H29Z" />}
          </svg>
        </ToolButton>
      );
    })}
  </Group>
);

/* ---------- small controls ---------- */

const Spin = () => (
  <svg width="5" height="10" viewBox="0 0 5 10"><path fill="#8c8c8c" d="M2.500 0L5 4H0ZM2.500 10L5 6H0Z" /></svg>
);

const Field = ({ id, value, w, off, label }) => (
  <FieldBox $w={w} $off={off}>
    <input id={id} defaultValue={value} disabled={off} aria-label={label} />
    <Spin />
  </FieldBox>
);

const Select = ({ id, value, w, off, label }) => (
  <SelectBox $w={w} $off={off}>
    <select id={id} disabled={off} aria-label={label}><option>{value}</option></select>
    <svg width="9" height="5" viewBox="0 0 9 5"><path fill="#ddd" d="M0 0H9L4.500 5Z" /></svg>
  </SelectBox>
);

const Check = ({ id, on = true }) => (
  <Tick>
    <input id={id} type="checkbox" defaultChecked={on} />
    {on && <svg width="12" height="12" viewBox="0 0 12 12"><path fill="none" stroke="#d4d4d4" strokeWidth="2" d="M2 5L4 10Q6 4 11 1" /></svg>}
  </Tick>
);

const Fold = () => <svg width="4" height="7" viewBox="0 0 4 7"><path fill="#111" d="M0 0L4 3.500L0 7Z" /></svg>;

const Property = ({ id, label, second, arrow, fold, children }) => (
  <Prop $second={second}>
    {arrow && <Fold />}
    <Label htmlFor={id} $second={second} $short={fold}>{label}</Label>
    {fold && <Fold />}
    {children}
  </Prop>
);

const Search = () => <svg width="14" height="16" viewBox="0 0 14 16"><circle cx="5" cy="5" r="4" fill="none" stroke="#222" strokeWidth="1.300" /><path stroke="#222" strokeWidth="2.500" d="M8 8L12 15" /></svg>;
const AddBox = () => <svg width="13" height="14" viewBox="0 0 13 14"><path fill="none" stroke="#222" d="M.5 1H12.500V13.500H.5Z" /><path fill="#222" d="M0 0H13V3H0ZM3 7.500H10V9.500H3ZM5.500 5H7.500V12H5.500Z" /></svg>;
const Lines = ({ w, h = 16, children }) => <svg width={w} height={h} viewBox={`0 0 ${w} ${h}`} fill="none" stroke="#222" strokeWidth="1.500">{children}</svg>;

/* ---------- perspective grid ---------- */

const project = (i, j) => {
  const w = 1 + 0.02706 * i - 0.06454 * j;
  return [851.3 + (139.75 * i + 56.2 * j) / w, 622.7 + (-39.76 * i + 95.37 * j) / w];
};

const seg = (a, b) => `M${a.map(n => n.toFixed(1)).join(" ")}L${b.map(n => n.toFixed(1)).join(" ")}`;

const gridLines = () => {
  const out = [];
  for (let n = -14; n <= 30; n++) {
    if (n === 0) continue;
    const far = Math.min(10, (0.9 + 0.02706 * n) / 0.06454 - 1);
    out.push(seg(project(n, -30), project(n, far)));
  }
  for (let n = -30; n <= 9; n++) {
    if (n === 0) continue;
    const near = Math.max(-14, (-0.9 + 0.06454 * n) / 0.02706 + 1);
    out.push(seg(project(near, n), project(40, n)));
  }
  return out.join("");
};

const Scene = () => (
  <svg viewBox="119 155 1532 989" preserveAspectRatio="xMidYMid slice" fill="none">
    <path stroke="#000" strokeOpacity="0.28" d={gridLines()} />
    <path stroke="#333" d={seg(project(0, -30), project(0, 10)) + seg(project(-14, 0), project(30, 0))} />
    <path stroke="#1f9e28" d="M851 622L843 173L850 199M843 173L837 181" />
    <path stroke="#2525a8" d="M851 622L1264 506L1244 502M1264 506L1260 518" />
    <path stroke="#b02020" d="M851 622L1076 1008L1085 987M1076 1008L1052 999" />
    <path stroke="#2fd02f" strokeWidth="1.500" d="M155 1107V1094" />
    <path stroke="#3a3ae0" strokeWidth="1.500" d="M155 1107L172 1102" />
    <path stroke="#e83a3a" strokeWidth="1.500" d="M155 1107L163 1118" />
    <g fontSize="11" textAnchor="middle">
      <text x="155" y="1089" fill="#2fd02f">Y</text>
      <text x="181" y="1104" fill="#3a3ae0">Z</text>
      <text x="167" y="1130" fill="#e83a3a">X</text>
    </g>
    <path stroke="#f51c22" strokeWidth="4" strokeLinecap="round" d="M1247 1058L1202 1118" />
    <path fill="#f51c22" d="M1190 1134L1195 1112L1209 1122Z" />
  </svg>
);

const frames = Array.from({ length: 201 }, (_, f) => f);

const FrameRuler = () => (
  <Ruler>
    <svg>
      {frames.map(f => {
        const x = `${f / 2}%`;
        return <line key={f} x1={x} x2={x} y1={f % 10 ? 20 : 19} y2="21" stroke={f % 10 ? "#aaa" : "#ddd"} />;
      })}
      {frames.filter(f => f % 25 === 0).map(f => (
        <line key={f} x1={`${f / 2}%`} x2={`${f / 2}%`} y1="1" y2="21" stroke="#6c6c6c" />
      ))}
      {frames.filter(f => f % 10 === 0).map(f => (
        <text key={f} x={`${f / 2}%`} y="11" fill="#bbb" textAnchor="middle">{f}</text>
      ))}
      <line x1="100%" x2="100%" y1="0" y2="17" stroke="#4fe08e" strokeWidth="9" />
    </svg>
  </Ruler>
);

const mainMenu = ["文件", "编辑", "创建", "选择", "工具", "网格", "捕捉", "动画", "模拟", "渲染", "雕刻", "运动跟踪", "运动图形", "角色", "流水线", "插件", "RealFlow", "INSYDIUM", "Octane", "Redshift", "脚本", "窗口", "帮助"];
const attrTabs = ["工程设置", "信息", "X-Particles", "动力学", "参考", "Octane Render", "待办事项", "帧插值"];
const axes = [["X", "X", "H"], ["Y", "Y", "P"], ["Z", "Z", "B"]];

const Menu = ({ items }) => items.map(m => <MenuItem key={m} $hot={m === "RealFlow"}>{m}</MenuItem>);

const ProjectSettings = () => (
  <Attributes>
    <ObjectName>
      <svg width="17" height="19" viewBox="0 0 17 19">
        <path fill="#eee" stroke="#333" d="M1 1H8L12 5V18H1Z" />
        <path stroke="#555" d="M3 4H8M3 7H7M3 10H6M3 13H6" />
        <circle cx="11" cy="12" r="3.500" fill="#333" stroke={RE} strokeWidth="2.500" />
        <circle cx="11" cy="12" r="5.300" fill="none" stroke={RE} strokeWidth="1.500" strokeDasharray="2 2.200" />
      </svg>
      工程
    </ObjectName>
    <Tabs>{attrTabs.map((t, i) => <Tab key={t} $on={i === 0}>{t}</Tab>)}</Tabs>
    <SectionTitle>工程设置</SectionTitle>

    <Block $plain $gap={2} $top={4} $bottom={3}>
      <PropRow>
        <Property id="scale" label="工程缩放"><Field id="scale" value="1" /><Select w={54} value="厘米" label="单位" /></Property>
      </PropRow>
      <Buttons><PillButton $w={180}>缩放工程...</PillButton></Buttons>
    </Block>
    <Block $gap={3} $top={5}>
      <PropRow>
        <Property id="fps" label="帧率(FPS)"><Field id="fps" value="25" /></Property>
        <Property second id="len" label="工程时长"><Field id="len" value="200 F" /></Property>
      </PropRow>
      <PropRow>
        <Property id="min" label="最小时长"><Field id="min" value="0 F" /></Property>
        <Property second id="max" label="最大时长"><Field id="max" value="200 F" /></Property>
      </PropRow>
      <PropRow>
        <Property id="pmin" label="预览最小时长"><Field id="pmin" value="0 F" /></Property>
        <Property second id="pmax" label="预览最大时长"><Field id="pmax" value="200 F" /></Property>
      </PropRow>
    </Block>
    <Block $top={5}>
      <PropRow>
        <Property id="lod" label="细节程度(LOD)"><Field id="lod" value="100 %" /></Property>
        <Property second id="rlod" label="编辑渲染检视使用渲染LOD级别"><Check id="rlod" on={false} /></Property>
      </PropRow>
    </Block>
    <Block>
      <PropRow $h={21}>
        <Property id="anim" label="使用动画"><Check id="anim" /></Property>
        <Property second id="expr" label="使用表达式"><Check id="expr" /></Property>
      </PropRow>
      <PropRow $h={21}>
        <Property id="gen" label="使用生成器"><Check id="gen" /></Property>
        <Property second id="def" label="使用变形器"><Check id="def" /></Property>
      </PropRow>
      <PropRow $h={21}>
        <Property id="clip" label="使用运动剪辑系统"><Check id="clip" /></Property>
      </PropRow>
    </Block>
    <Block>
      <PropRow><Property id="defcol" label="默认对象颜色"><Select id="defcol" w={80} value="灰蓝色" /></Property></PropRow>
      <PropRow><Property fold id="col" label="颜色"><Swatch id="col" /></Property></PropRow>
    </Block>
    <Block $top={4}>
      <PropRow><Property arrow id="view" label="视图修剪"><Select id="view" w={80} value="中" /></Property></PropRow>
    </Block>
    <Block $gap={1}>
      <PropRow><Property id="lin" label="线性工作流程"><Check id="lin" /></Property></PropRow>
      <PropRow><Property arrow id="prof" label="输入色彩特性"><Select id="prof" w={80} value="sRGB" /></Property></PropRow>
    </Block>
    <Block>
      <Buttons>
        <PillButton $w={77}>载入预设...</PillButton>
        <PillButton $w={77}>保存预设...</PillButton>
      </Buttons>
    </Block>
    <FpsFrame />
  </Attributes>
);

const App = () => (
  <Window>
    <GlobalStyle />
    <TitleBar>
      <svg width="13" height="15" viewBox="0 0 13 15"><circle cx="6" cy="8" r="6" fill="#141c4c" /><circle cx="8" cy="6" r="3.500" fill="#5a7ad8" /><circle cx="9" cy="4.500" r="1.500" fill="#dfe8ff" /></svg>
      <WindowTitle>CINEMA 4D R19.068 Studio (RC - R19) - [未标题 1 *] - 主要</WindowTitle>
      <WindowButton aria-label="最小化"><svg width="10" height="10"><path stroke="#000" d="M0 5.500H10" /></svg></WindowButton>
      <WindowButton aria-label="还原"><svg width="11" height="11" fill="none" stroke="#000"><path d="M.5 3.500H7.500V10.500H.5ZM2.500 3.500V.5H10.500V8.500H7.500" /></svg></WindowButton>
      <WindowButton aria-label="关闭"><svg width="11" height="11"><path stroke="#000" d="M.5.5L10.500 10.500M10.500.5L.5 10.500" /></svg></WindowButton>
    </TitleBar>
    <MenuBar $height={27}>
      <Menu items={mainMenu} />
      <Spacer />
      <IconStrip $gap={5}>
        <label htmlFor="layout">界面:</label>
        <Select id="layout" w={128} value="启动 (用户)" />
        <Search />
      </IconStrip>
    </MenuBar>

    <Workspace>
      <LeftMain>
        <Toolbar>
          <Grip $w={5} $h={28} />
          <Tools gap={3} items="undo redo" />
          <Tools gap={10} items="live+ move* scale rotate" />
          <Tools items="move+" />
          <Tools gap={10} items="x* y* z* coord" />
          <Tools gap={10} items="clapFrame clapBox+ clapGear" />
          <Tools gap={10} items="cube+ pen+ subdiv+ array+ bend+ floor+ camera+ bulb+ s particles clapRed frog drop globe dotRing docAxis psr qr" />
        </Toolbar>

        <Row $grow>
          <Palette $first>
            <Grip $w={22} $h={5} />
            <Tools vertical items="globes" />
            <Tools vertical gap={10} items="modelCube*+ texCube meshOrange" />
            <Tools vertical items="pointCube edgeCube faceCube" />
            <Tools vertical gap={10} items="axisL mouse* snapS*+" />
            <Tools vertical gap={10} items="magnet+" />
            <Tools vertical gap={10} items="meshLock*+ meshRot+" />
            <Brand><b>MAXON</b>CINEMA 4D</Brand>
          </Palette>

          <Stack>
            <Toolbar $inset={2}>
              <Grip $w={5} $h={28} />
              <Tools items="tree+" />
              <Tools items="align slashCluster" />
              <Tools items="splineCursor paint" />
              <Tools items="linear radial grid9" />
              <Tools items="matrix cloner fracture voronoi tracer text wireCube swirl" />
              <Tools items="bend2 fx" />
            </Toolbar>

            <Row $grow>
              <Palette>
                <Grip $w={22} $h={5} />
                <Tools vertical items="move x0 x0 x0 x0 x0 x0 x0" />
              </Palette>
              <Palette>
                <Grip $w={22} $h={5} />
                <Tools vertical items="help+ live rectSel lasso polySel" />
                <Tools vertical items="e1 e2 e3 e4 e5 e6" />
                <Tools vertical items="d1 d2 eX" />
                <Tools vertical items="d3 d4 d5" />
                <Tools vertical items="v1 v2 v3 v4" />
                <Tools vertical items="t1 t2 orangeDots t4" />
              </Palette>

              <ViewPanel>
                <MenuBar $panel $height={24}>
                  <MenuGrip />
                  <Menu items={["查看", "摄像机", "显示", "选项", "过滤", "面板", "ProRender"]} />
                  <Spacer />
                  <IconStrip>
                    <svg width="13" height="13" viewBox="0 0 36 36"><Move c="#222" s={1.1} /></svg>
                    <svg width="12" height="14" viewBox="0 0 12 14"><path fill="#222" d="M6 0L11 5H7.500V9H11L6 14L1 9H4.500V5H1Z" /></svg>
                    <Lines w={14} h={14}><circle cx="7" cy="7" r="5.500" strokeDasharray="7 2" /><path d="M7 4V10" /></Lines>
                    <Lines w={13} h={14}><path d="M1 1H12V13H1ZM1 7H6V13" /></Lines>
                  </IconStrip>
                </MenuBar>
                <View>
                  <Scene />
                  <SafeStrip />
                  <SafeStrip $bottom />
                  <ViewLabel $at="left: 0; top: 1px;">透视视图</ViewLabel>
                  <ParticleInfo>
                    <span>Number of emitters: 0</span>
                    <span>Total live particles: 0</span>
                  </ParticleInfo>
                  <ViewLabel $at="left: 50%; bottom: 2px; transform: translateX(-50%);">帧速 : 250.0</ViewLabel>
                  <ViewLabel $at="right: 1px; bottom: 2px;">网格间距 : 100 cm</ViewLabel>
                </View>
              </ViewPanel>

              <Palette $wide>
                <Grip $w={26} $h={5} />
                <Tools vertical items="n0 n1 n2 n3 n4 n5 n6 n7 n8 n9" />
              </Palette>
            </Row>

            <Timeline>
              <Grip $w={5} $h={15} />
              <FrameRuler />
              <Field value="200 F" label="结束帧" />
            </Timeline>
            <Transport>
              <Grip $w={5} $h={20} />
              <IconStrip $gap={4}><span /><Field value="0 F" label="起始帧" /></IconStrip>
              <RangeBar>
                <span><svg width="7" height="8"><path fill="#eee" d="M7 0V8L0 4Z" /></svg>0 F</span>
                <span>200 F<svg width="7" height="8"><path fill="#eee" d="M0 0V8L7 4Z" /></svg></span>
              </RangeBar>
              <Field value="200 F" label="预览结束" />
              <Tools size={28} gap={10} items="first" />
              <Tools size={28} gap={10} items="prevKey prev play next nextKey" />
              <Tools size={28} gap={10} items="last" />
              <Tools size={28} gap={10} items="key autokey ask" />
              <Tools size={28} gap={10} items="moveO* scaleO* rotateO* p* dotsO" />
              <Tools size={28} gap={10} items="film*+" />
            </Transport>

            <Row>
              <Materials>
                <MenuBar $panel $lined $height={24}>
                  <MenuGrip />
                  <Menu items={["创建", "编辑", "功能", "纹理", "Cycles 4D"]} />
                </MenuBar>
              </Materials>
              <Coordinates>
                <CoordHead><Grip $w={12} /><span>--</span><span>--</span><span>--</span></CoordHead>
                <CoordGrid>
                  {axes.map(row => row.map((a, c) => (
                    <React.Fragment key={a + c}>
                      <label htmlFor={`axis-${a}${c}`}>{a}</label>
                      <Field id={`axis-${a}${c}`} w={84} off value={c === 2 ? "0 °" : "0 cm"} />
                    </React.Fragment>
                  )))}
                  <span /><Select w={84} off value="世界坐标" label="坐标系" />
                  <span /><Select w={84} off value="缩放比例" label="尺寸" />
                  <span /><PillButton $w={84}>应用</PillButton>
                </CoordGrid>
              </Coordinates>
            </Row>
          </Stack>
        </Row>
        <Status><Grip $w={13} $h={12} /></Status>
      </LeftMain>

      <Side>
        <Dock>
          <DockBody>
            <MenuBar $panel $lined $height={24}>
              <MenuGrip />
              <Menu items={["文件", "编辑", "查看", "对象", "标签", "书签"]} />
              <Spacer />
              <IconStrip $gap={5}>
                <Search />
                <Lines w={14}><path strokeWidth="2" d="M7 2L2 8H4V14H10V8H12Z" /></Lines>
                <Lines w={14}><path strokeWidth="1" d="M1 9Q7 4 13 9Q7 13 1 9Z" /></Lines>
                <AddBox />
              </IconStrip>
            </MenuBar>
            <ObjectList />
          </DockBody>
          <DockTabs>
            <DockTab $on>对象</DockTab>
            <DockTab>场次</DockTab>
            <DockTab>内容浏览器</DockTab>
            <DockTab>构造</DockTab>
          </DockTabs>
        </Dock>
        <Dock $grow>
          <DockBody>
            <MenuBar $panel $light $lined $height={25}>
              <MenuGrip />
              <Menu items={["模式", "编辑", "用户数据"]} />
              <Spacer />
              <IconStrip $gap={5}>
                <svg width="60" height="18" fill="none" stroke="#7d7d7d"><path d="M0 9L18 2V16ZM36 9L18 2V16ZM44 17L52 1L60 17L52 13Z" /></svg>
                <span />
                <Search />
                <span />
                <Lines w={13}><path d="M1 7H12V15H1ZM3 7V4Q6 -1 9 4M6.500 10V13" /></Lines>
                <Lines w={15}><circle cx="7.500" cy="8" r="6.500" /><circle cx="7.500" cy="8" r="3.500" /><circle cx="7.500" cy="8" r="1" /></Lines>
                <AddBox />
              </IconStrip>
            </MenuBar>
            <ProjectSettings />
          </DockBody>
          <DockTabs>
            <DockTab $on>属性</DockTab>
            <DockTab>层</DockTab>
          </DockTabs>
        </Dock>
      </Side>
    </Workspace>

    <Badge>
      <svg width="50" height="50" viewBox="0 0 50 50">
        <circle cx="25" cy="25" r="25" fill="#2a86f2" />
        <circle cx="25" cy="25" r="23" fill="#fff" />
        <circle cx="25" cy="25" r="21.500" fill="none" stroke="#222" />
        <path fill="#111" d="M21 22Q25 20 29 22L28 29Q25 33 22 29Z" />
        <path fill="none" stroke="#111" strokeWidth="1.800" d="M22 22Q20 19 16 18L14 12M16 18L13 17M19 19V13M28 22Q30 19 34 18L36 12M34 18L37 17M31 19V13" />
        <text x="25" y="40" fontSize="7" fontWeight="700" textAnchor="middle" fill="#111">行鹿客</text>
      </svg>
    </Badge>
  </Window>
);

export default App;
